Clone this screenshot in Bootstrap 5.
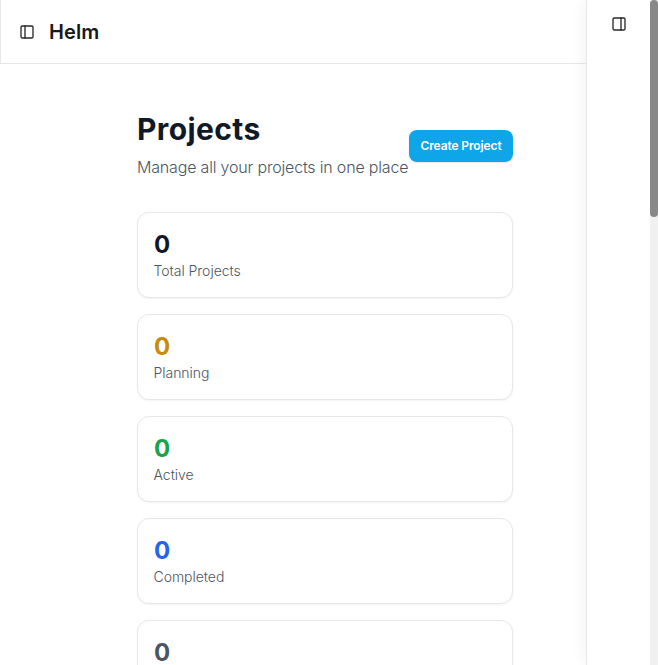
<!DOCTYPE html>
<html lang="en">
<head>
<meta charset="utf-8">
<meta name="viewport" content="width=device-width, initial-scale=1">
<title>Helm</title>
<link href="https://cdn.jsdelivr.net/npm/bootstrap@5.3.0/dist/css/bootstrap.min.css" rel="stylesheet">
<style>
body{font-family:Inter,"Liberation Sans",sans-serif;color:#111827;background:#fff}
.app-main{min-width:0}
.app-header{height:64px;border-bottom:1px solid #e5e7eb;border-left:1px solid #e5e7eb;padding-left:18px;gap:14px}
.brand{font-size:20px;line-height:28px;font-weight:600;letter-spacing:.1px;color:#18181b}
.icon-panel{width:16px;height:16px;fill:none;stroke:#27272a;stroke-width:2;stroke-linecap:round;stroke-linejoin:round;display:block}
.page{padding:47px 73px 0 137px}
.page-title{font-size:30px;line-height:36px;font-weight:700;letter-spacing:.4px}
.page-sub{font-size:16px;line-height:24px;color:#4b5563;white-space:nowrap;font-weight:300;letter-spacing:-.18px}
.btn-create{width:104px;height:32px;background:#0ea5e9;color:#fff;border:0;border-radius:8px;font-size:12px;line-height:16px;font-weight:600;letter-spacing:-.12px;padding:0;white-space:nowrap;box-shadow:0 1px 2px rgba(0,0,0,.1);margin-top:2px}
.stat{height:86px;border:1px solid #e5e7eb;border-radius:12px;background:#fff;padding:16px;box-shadow:0 1px 2px rgba(0,0,0,.05)}
.stat-list{margin-top:33px}
.stat-num{font-size:24px;line-height:32px;font-weight:700}
.stat-label{font-size:14px;line-height:20px;color:#4b5563;font-weight:300;letter-spacing:-.03px;margin-left:-.5px}
.c-plan{color:#ca8a04}.c-act{color:#16a34a}.c-done{color:#2563eb}.c-arch{color:#4b5563}
.side{width:64px;border-left:1px solid #e5e7eb;padding-top:16px;background:#fff;box-shadow:0 0 15px rgba(0,0,0,.07);z-index:1}
.scroll-track{width:8px;background:#f1f1f1;z-index:2}
.scroll-thumb{height:217px;border-radius:4px;background:#888}
</style>
<script src="https://cdn.jsdelivr.net/npm/bootstrap@5.3.0/dist/js/bootstrap.bundle.min.js"></script>
</head>
<body class="vh-100 overflow-hidden d-flex">
<main class="app-main flex-grow-1 overflow-hidden">
  <header class="app-header d-flex align-items-center">
    <svg class="icon-panel" viewBox="0 0 24 24"><rect x="3" y="3" width="18" height="18" rx="2"/><path d="M9 3v18"/></svg>
    <span class="brand">Helm</span>
  </header>
  <div class="page">
    <div class="d-flex justify-content-between align-items-center">
      <div>
        <h1 class="page-title mb-2">Projects</h1>
        <p class="page-sub mb-0">Manage all your projects in one place</p>
      </div>
      <button class="btn btn-create flex-shrink-0" type="button">Create Project</button>
    </div>
    <section class="stat-list d-flex flex-column gap-3">
      <div class="stat flex-shrink-0"><div class="stat-num">0</div><div class="stat-label">Total Projects</div></div>
      <div class="stat flex-shrink-0"><div class="stat-num c-plan">0</div><div class="stat-label">Planning</div></div>
      <div class="stat flex-shrink-0"><div class="stat-num c-act">0</div><div class="stat-label">Active</div></div>
      <div class="stat flex-shrink-0"><div class="stat-num c-done">0</div><div class="stat-label">Completed</div></div>
      <div class="stat flex-shrink-0"><div class="stat-num c-arch">0</div></div>
    </section>
  </div>
</main>
<aside class="side position-relative flex-shrink-0 d-flex justify-content-center align-items-start">
  <svg class="icon-panel" viewBox="0 0 24 24"><rect x="3" y="3" width="18" height="18" rx="2"/><path d="M15 3v18"/></svg>
</aside>
<div class="scroll-track position-relative flex-shrink-0"><div class="scroll-thumb"></div></div>
</body>
</html>
